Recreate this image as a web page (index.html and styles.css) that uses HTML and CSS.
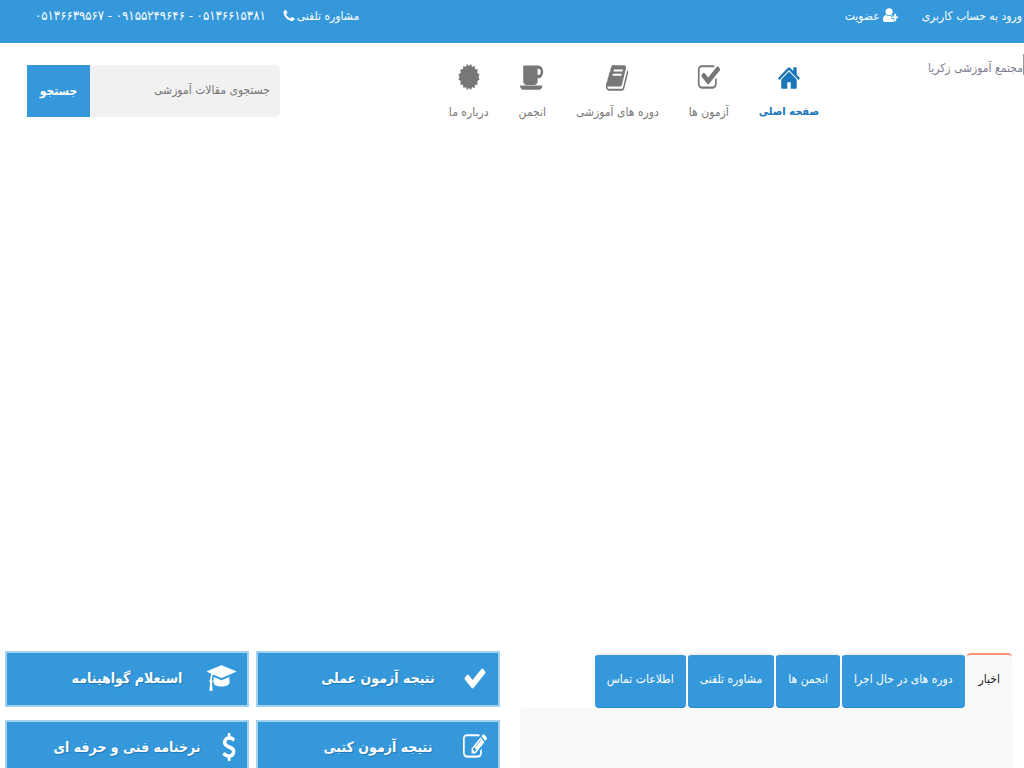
FILE: index.html
```html
<!DOCTYPE html>
<html lang="fa" dir="rtl">
<head>
<meta charset="utf-8">
<meta name="viewport" content="width=device-width, initial-scale=1">
<title>مجتمع آموزشی زکریا</title>
<link rel="stylesheet" href="styles.css">
</head>
<body>
<div class="topbar">
  <div class="account">
    <a href="#">ورود به حساب کاربری</a>
    <a href="#" class="with-icon"><svg class="icon-user" viewBox="0 0 16 16" aria-hidden="true"><circle cx="6.500" cy="4" r="3.800"/><path d="M3 7.500Q0 8 0 12.500Q0 15 2 15H10.500Q12 15 12 13.500H11.300V11.700H9V8.300H10.500V7.600Q10.300 7.500 10 7.500Q6.500 9.500 3 7.500ZM12 6H14V9H16.500V11H14V14H12V11H9.700V9H12Z"/></svg>عضویت</a>
  </div>
  <div class="phone">
    <span>مشاوره تلفنی</span>
    <svg class="icon-phone" viewBox="0 0 1792 1792" aria-hidden="true"><path d="M1600 1240q0 27-10 70.500t-21 68.500q-21 50-122 106-94 51-186 51-27 0-52.500-3.500t-57.500-12.500-47.500-14.500-55.500-20.500-49-18q-98-35-175-83-128-79-264.500-215.500t-215.500-264.500q-48-77-83-175-3-9-18-49t-20.500-55.500-14.500-47.500-12.500-57.500-3.500-52.500q0-92 51-186 56-101 106-122 25-11 68.500-21t70.500-10q14 0 21 3 18 6 53 76 11 19 30 54t35 63.500 31 53.500q3 4 17.500 25t21.500 35.500 7 28.500q0 20-28.500 50t-62 55-62 53-28.500 46q0 9 5 22.500t8.500 20.500 14 24 11.500 19q76 137 174 235t235 174q2 1 19 11.500t24 14 20.500 8.500 22.500 5q18 0 46-28.500t53-62 55-62 50-28.500q14 0 28.500 7t35.500 21.500 25 17.500q25 15 53.500 31t63.500 35 54 30q70 35 76 53 3 7 3 21z"/></svg>
    <span class="numbers">۰۵۱۳۶۶۱۵۳۸۱ - ۰۹۱۵۵۲۴۹۶۴۶ - ۰۵۱۳۶۶۳۹۵۶۷</span>
  </div>
</div>
<header class="header">
  <a href="#" class="brand">مجتمع آموزشی زکریا</a>
  <nav class="nav">
    <a href="#" class="nav-item active"><svg viewBox="0 0 1792 1792" preserveAspectRatio="none" aria-hidden="true"><path d="M1472 992v480q0 26-19 45t-45 19h-384v-384h-256v384h-384q-26 0-45-19t-19-45v-480q0-1 .5-3t.5-3l575-474 575 474q1 2 1 6zm223-69l-62 74q-8 9-21 11h-3q-13 0-21-7l-692-577-692 577q-12 8-24 7-13-2-21-11l-62-74q-8-10-7-23.500t11-21.500l719-599q32-26 76-26t76 26l244 204v-195q0-14 9-23t23-9h192q14 0 23 9t9 23v408l219 182q10 8 11 21.500t-7 23.500z"/></svg>صفحه اصلی</a>
    <a href="#" class="nav-item"><svg viewBox="0 0 1792 1792" preserveAspectRatio="none" aria-hidden="true"><path d="M1472 930v318q0 119-84.500 203.500t-203.500 84.500h-832q-119 0-203.500-84.500t-84.500-203.500v-832q0-119 84.500-203.500t203.500-84.500h832q63 0 117 25 15 7 18 23 3 17-9 29l-49 49q-10 10-23 10-3 0-9-2-23-6-45-6h-832q-66 0-113 47t-47 113v832q0 66 47 113t113 47h832q66 0 113-47t47-113v-254q0-13 9-22l64-64q10-10 23-10 6 0 12 3 20 8 20 29zm231-489l-814 814q-24 24-57 24t-57-24l-430-430q-24-24-24-57t24-57l110-110q24-24 57-24t57 24l263 263 647-647q24-24 57-24t57 24l110 110q24 24 24 57t-24 57z"/></svg>آزمون ها</a>
    <a href="#" class="nav-item"><svg viewBox="0 0 1792 1792" preserveAspectRatio="none" aria-hidden="true"><path d="M1703 478q40 57 18 129l-275 906q-19 64-76.500 107.500t-122.500 43.500h-923q-77 0-148.500-53.500t-99.500-131.500q-24-67-2-127 0-4 3-27t4-37q1-8-3-21.500t-3-19.500q2-11 8-21t16.500-23.500 16.500-23.500q23-38 45-91.500t30-91.500q3-10 .5-30t-.5-28q3-11 17-28t17-23q21-36 42-92t25-90q1-9-2.500-32t.5-28q4-13 22-30.500t22-22.500q19-26 42.500-84.500t27.500-96.500q1-8-3-25.500t-2-26.500q2-8 9-18t18-23 17-21q8-12 16.500-30.500t15-35 16-36 19.500-32 26.500-23.500 36-11.500 47.500 5.500l-1 3q38-9 51-9h761q74 0 114 56t18 130l-274 906q-36 119-71.500 153.500t-128.500 34.500h-869q-27 0-38 15-11 16-1 43 24 70 144 70h923q29 0 56-15.500t35-41.500l300-987q7-22 5-57 38 15 59 43zm-1064 2q-4 13 2 22.500t20 9.500h608q13 0 25.500-9.500t16.500-22.500l21-64q4-13-2-22.500t-20-9.500h-608q-13 0-25.500 9.500t-16.500 22.500zm-83 256q-4 13 2 22.500t20 9.500h608q13 0 25.500-9.500t16.500-22.500l21-64q4-13-2-22.500t-20-9.500h-608q-13 0-25.500 9.500t-16.500 22.500z"/></svg>دوره های آموزشی</a>
    <a href="#" class="nav-item"><svg viewBox="0 0 1920 1792" preserveAspectRatio="none" aria-hidden="true"><path d="M1664 528q0-80-56-136t-136-56h-64v384h64q80 0 136-56t56-136zM0 1344h1792q0 106-75 181t-181 75h-1280q-106 0-181-75t-75-181zM1856 528q0 159-112.500 271.500t-271.500 112.500h-64v172q0 92-66 158t-158 66h-704q-92 0-158-66t-66-158v-876q0-26 19-45t45-19h1152q159 0 271.500 112.500t112.500 271.500z" fill-rule="evenodd"/></svg>انجمن</a>
    <a href="#" class="nav-item"><svg viewBox="0 0 28 28" preserveAspectRatio="none" aria-hidden="true"><path d="M14 3l2.500-2 1.500 3 3-1.200.7 3.500 3.300 0-.4 3.700 2.900 1.500-1.500 2.500 1.500 2.500-2.900 1.500.4 3.700-3.300 0-.7 3.500-3-1.200-1.500 3-2.500-2-2.500 2-1.500-3-3 1.200-.7-3.500-3.300 0 .4-3.700-2.900-1.500L2 14 .5 11.500l2.900-1.500L3 6.300l3.300 0L7 2.800 10 4l1.500-3z"/></svg>درباره ما</a>
  </nav>
  <form class="search">
    <input type="search" aria-label="جستجوی مقالات آموزشی" placeholder="جستجوی مقالات آموزشی">
    <button type="button">جستجو</button>
  </form>
</header>
<main class="main">
  <section class="news">
    <div class="tabs" role="tablist">
      <button class="tab selected" role="tab" aria-selected="true">اخبار</button>
      <button class="tab" role="tab">دوره های در حال اجرا</button>
      <button class="tab" role="tab">انجمن ها</button>
      <button class="tab" role="tab">مشاوره تلفنی</button>
      <button class="tab" role="tab">اطلاعات تماس</button>
    </div>
    <div class="panel" role="tabpanel"></div>
  </section>
  <section class="tiles">
    <a href="#" class="tile"><svg viewBox="0 0 1792 1792" preserveAspectRatio="none" aria-hidden="true"><path d="M1671 566q0 40-28 68l-724 724-136 136q-28 28-68 28t-68-28l-136-136-362-362q-28-28-28-68t28-68l136-136q28-28 68-28t68 28l294 295 656-657q28-28 68-28t68 28l136 136q28 28 28 68z"/></svg><span>نتیجه آزمون عملی</span></a>
    <a href="#" class="tile"><svg class="wide" viewBox="0 0 2304 1792" preserveAspectRatio="none" aria-hidden="true"><path d="M1774 836l18 316q4 69-82 128t-235 93.500-323 34.500-323-34.500-235-93.500-82-128l18-316 574 181q22 7 48 7t48-7zm530-324q0 23-22 31l-1120 352q-4 1-10 1t-10-1l-652-206q-43 34-71 111.500t-34 178.500q63 36 63 109 0 69-58 107l58 433q2 14-8 25-9 11-24 11h-192q-15 0-24-11-10-11-8-25l58-433q-58-38-58-107 0-73 65-111 11-207 98-330l-333-104q-22-8-22-31t22-31l1120-352q4-1 10-1t10 1l1120 352q22 8 22 31z"/></svg><span>استعلام گواهینامه</span></a>
    <a href="#" class="tile"><svg viewBox="0 0 1792 1792" preserveAspectRatio="none" aria-hidden="true"><path d="M888 1184l116-116-152-152-116 116v56h96v96h56zm440-720q-16-16-33 1l-350 350q-17 17-1 33t33-1l350-350q17-17 1-33zm80 594v190q0 119-84.500 203.500t-203.500 84.500h-832q-119 0-203.500-84.500t-84.500-203.500v-832q0-119 84.500-203.500t203.500-84.500h832q63 0 117 25 15 7 18 23 3 17-9 29l-49 49q-14 14-32 8-23-6-45-6h-832q-66 0-113 47t-47 113v832q0 66 47 113t113 47h832q66 0 113-47t47-113v-126q0-13 9-22l64-64q15-15 35-7t20 29zm-96-738l288 288-672 672h-288v-288zm444 132l-92 92-288-288 92-92q28-28 68-28t68 28l152 152q28 28 28 68t-28 68z"/></svg><span>نتیجه آزمون کتبی</span></a>
    <a href="#" class="tile"><svg class="narrow" viewBox="384 0 1024 1792" preserveAspectRatio="none" aria-hidden="true"><path d="M1362 1185q0 153-99.500 263.500t-258.500 136.500v175q0 14-9 23t-23 9h-135q-13 0-22.500-9.500t-9.500-22.500v-175q-66-9-127.500-31t-101.500-44.500-74-48-46.500-37.500-17.500-18q-17-21-2-41l103-135q7-10 23-12 15-2 24 9l2 2q113 99 243 125 37 8 74 8 81 0 142.500-43t61.500-122q0-28-15-53t-33.500-42-58.500-37.500-66-32-80-32.500q-39-16-61.500-25t-61.500-26.500-62.500-31-56.500-35.500-53.500-42.500-43.500-49-35.500-58-21-66.500-8.500-78q0-138 98-242t255-134v-180q0-13 9.500-22.500t22.500-9.500h135q14 0 23 9t9 23v176q57 6 110.500 23t87 33.500 63.500 37.500 39 29 15 14q17 18 5 38l-81 146q-8 15-23 16-14 3-27-7-3-3-14.500-12t-39-26.500-58.500-32-74.500-26-85.500-11.500q-95 0-155 43t-60 111q0 26 8.500 48t29.500 41.500 39.500 33 56 31 60.500 27 70 27.500q53 20 81 31.500t76 35 75.500 42.500 62 50 53 63.500 31.500 76.500 13 94z"/></svg><span>نرخنامه فنی و حرفه ای</span></a>
  </section>
</main>
</body>
</html>
```
FILE: styles.css
```css
* { box-sizing: border-box; }
html, body { height: 100%; }
body {
  margin: 0;
  background: #fff;
  color: #777;
  font-family: "DejaVu Sans Condensed", "DejaVu Sans", sans-serif;
  font-size: 12px;
  line-height: 20px;
  display: flex;
  flex-direction: column;
  overflow: hidden;
}
a { color: inherit; text-decoration: none; }
svg { fill: currentColor; }
button, input { font: inherit; border: 0; margin: 0; }
.topbar {
  background: #3498db;
  color: #fff;
  height: 43px;
  flex: none;
  display: flex;
  justify-content: space-between;
  padding: 6px 2px 0 35px;
  white-space: nowrap;
}
.account { display: flex; gap: 24px; }
.with-icon { display: flex; gap: 3px; }
.icon-user { width: 15px; height: 15px; margin-top: 2px; }
.phone { display: flex; }
.numbers { font-size: 13px; }
.icon-phone { width: 14px; height: 16px; margin: 2px 1px 0 16px; }
.header {
  display: flex;
  flex: none;
  padding-left: 27px;
  white-space: nowrap;
}
.brand {
  width: 205px;
  padding-top: 15px;
  color: #7d7d8f;
  border-right: 1px solid #999;
  border-image: linear-gradient(transparent 12px, #999 12px, #999 32px, transparent 32px) 1;
}
.nav { display: flex; gap: 30px; padding-top: 20px; }
.nav-item {
  display: flex;
  flex-direction: column;
  align-items: center;
  gap: 9px;
}
.nav-item svg { width: 24px; height: 30px; }
.nav-item:last-child svg { width: 22px; height: 28px; margin-bottom: 2px; }
.active { color: #1a76b9; font-size: 11px; font-weight: bold; }
.search { display: flex; margin: 22px auto 0 0; height: 52px; }
.search input {
  width: 190px;
  background: #f1f1f1;
  padding: 0 10px 3px;
  border-radius: 0 5px 5px 0;
}
.search input::placeholder { color: #777; opacity: 1; }
.search button {
  width: 63px;
  background: #3498db;
  color: #fff;
  font-weight: bold;
}
.main {
  margin-top: auto;
  flex: none;
  height: 117px;
  display: grid;
  grid-template-columns: 493fr 495fr;
  gap: 20px;
  padding: 0 11px 0 5px;
}
.news { display: flex; flex-direction: column; padding-top: 2px; }
.tabs { display: flex; gap: 2px; padding-right: 1px; }
.tab {
  height: 55px;
  padding: 0 12px 4px;
  background: #3498db;
  color: #fff;
  border-top: 2px solid #f1f1f1;
  border-bottom: 1px solid #218bd2;
  border-radius: 4px;
  white-space: nowrap;
}
.selected { background: #f9f9f9; color: #222; border-top-color: #ff8f75; border-bottom-color: #f9f9f9; border-radius: 4px 4px 0 0; }
.panel { flex: 1; background: #f9f9f9; border-radius: 4px 4px 0 0; }
.tiles { display: grid; grid-template-columns: 1fr 1fr; grid-auto-rows: 56px; gap: 13px 7px; }
.tile {
  display: grid;
  grid-template-columns: 30px 1fr 30px;
  align-items: center;
  padding: 0 11px 2px;
  background: #3498db;
  border: 2px solid #a2d0f0;
  color: #fff;
  font-size: 14px;
  font-weight: bold;
  text-shadow: 1px 1px 1px #2478b0;
}
.tile svg { width: 24px; height: 30px; }
.tile .wide { width: 29px; height: 30px; }
.tile .narrow { width: 14px; height: 28px; }
.tile span { text-align: center; white-space: nowrap; }
```
